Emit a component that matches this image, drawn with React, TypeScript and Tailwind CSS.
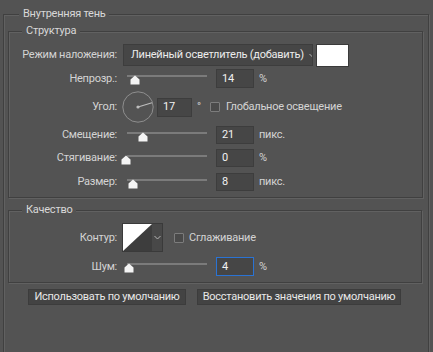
import React from 'react'

// thumb centre, counted from the left end of the track
interface SliderProps {
    pos: number
}

const Slider = ({ pos }: SliderProps) => (
    <div className="relative ml-[9px] h-full w-[80px] shrink-0">
        <div className="absolute left-0 right-0 top-[6px] h-[2px] bg-[#7b7b7b]" />
        <svg className="absolute top-[6px]" style={{ left: pos - 5 }} width="10" height="10" viewBox="0 0 10 10">
            <path d="M5 0.5 L9.5 4.5 V9.5 H0.5 V4.5 Z" fill="#f4f4f4" />
        </svg>
    </div>
)

const NumBox = ({ value, active }: { value: string; active?: boolean }) => (
    <div
        className={`ml-[9px] flex h-full w-[38px] shrink-0 items-center border pl-[5px] text-[#f2f2f2] ${
            active ? 'border-[#2a73d4] bg-[#464646]' : 'border-[#3d3d3d] bg-[#464646]'
        }`}
    >
        {value}
    </div>
)

const Label = ({ text }: { text: string }) => (
    <div className="w-[109px] shrink-0 whitespace-nowrap pr-[1px] text-right text-[#d3d3d3]">{text}</div>
)

const CheckBox = ({ className }: { className: string }) => (
    <div className={`h-[10px] w-[10px] shrink-0 rounded-[1px] border border-[#7c7c7c] bg-[#4a4a4a] ${className}`} />
)

const Chevron = () => (
    <svg width="7" height="5" viewBox="0 0 7 5">
        <path d="M0.5 1 L3.5 4 L6.5 1" fill="none" stroke="#b4b4b4" strokeWidth="1" />
    </svg>
)

const SliderRow = ({ label, pos, value, unit, active, className }: {
    label: string; pos: number; value: string; unit: string; active?: boolean; className: string
}) => (
    <div className={`flex items-center ${className}`}>
        <Label text={label} />
        <Slider pos={pos} />
        <NumBox value={value} active={active} />
        <div className="ml-[5px] text-[#d3d3d3]">{unit}</div>
    </div>
)

const boxCls = 'border border-[#404040] shadow-[inset_1px_1px_0_#616161,1px_1px_0_#616161]'
const legendCls = 'bg-[#535353] px-[4px] leading-[16px] text-[#d8d8d8]'

// COMPONENT: INNER SHADOW PANEL
export default function App() {
    return (
        <div className="h-[352px] w-[433px] overflow-hidden bg-[#535353] font-['Roboto',sans-serif] text-[11px] leading-[16px] tracking-[-0.25px]">
            <fieldset className={`ml-[3px] mt-[6px] h-[420px] w-[426px] pl-[4px] pr-[5px] ${boxCls}`}>
                <legend className={`ml-[11px] ${legendCls}`}>Внутренняя тень</legend>

                {/* Structure */}
                <fieldset className={`mt-[1px] pb-[6px] ${boxCls}`}>
                    <legend className={`ml-[13px] ${legendCls}`}>Структура</legend>

                    <div className="mt-[5px] flex h-[22px] items-center">
                        <Label text="Режим наложения:" />
                        <div className="ml-[5px] flex h-full w-[190px] items-center overflow-hidden border border-[#3d3d3d] bg-[#464646] pl-[7px] pr-[4px] text-[#ececec]">
                            <span className="whitespace-nowrap">Линейный осветлитель (добавить)</span>
                            <span className="ml-[5px] flex">
                                <Chevron />
                            </span>
                        </div>
                        <div className="ml-[3px] h-[23px] w-[33px] border border-[#3a3a3a] bg-white" />
                    </div>

                    <SliderRow className="mt-[3px] h-[19px]" label="Непрозр.:" pos={8} value="14" unit="%" />

                    <div className="mt-[3px] flex h-[32px] items-center">
                        <Label text="Угол:" />
                        <svg className="ml-[4px] shrink-0" width="32" height="32" viewBox="0 0 32 32">
                            <circle cx="16" cy="16" r="15.2" fill="none" stroke="#8e8e8e" strokeWidth="1" />
                            <line x1="16" y1="16" x2="30" y2="11.7" stroke="#bdbdbd" strokeWidth="1.2" />
                            <circle cx="16" cy="16" r="1.6" fill="#bdbdbd" />
                        </svg>
                        <div className="ml-[3px] flex h-[19px] w-[35px] items-center border border-[#3d3d3d] bg-[#464646] pl-[5px] text-[#f2f2f2]">
                            17
                        </div>
                        <div className="ml-[5px] w-[8px] text-[#d3d3d3]">°</div>
                        <CheckBox className="ml-[5px]" />
                        <div className="ml-[6px] whitespace-nowrap text-[#d3d3d3]">Глобальное освещение</div>
                    </div>

                    <SliderRow className="mt-[3px] h-[18px]" label="Смещение:" pos={16} value="21" unit="пикс." />
                    <SliderRow className="mt-[5px] h-[18px]" label="Стягивание:" pos={-1} value="0" unit="%" />
                    <SliderRow className="mt-[6px] h-[18px]" label="Размер:" pos={6} value="8" unit="пикс." />
                </fieldset>

                {/* Quality */}
                <fieldset className={`mt-[4px] w-[414px] pb-[6px] ${boxCls}`}>
                    <legend className={`ml-[13px] ${legendCls}`}>Качество</legend>

                    <div className="mt-[5px] flex h-[29px] items-center">
                        <Label text="Контур:" />
                        <div className="ml-[4px] flex h-full border border-[#3a3a3a]">
                            <svg width="29" height="27" viewBox="0 0 29 27" className="block">
                                <rect width="29" height="27" fill="#3d3d3d" />
                                <path d="M0 0 H29 L0 27 Z" fill="#ffffff" />
                            </svg>
                            <div className="flex w-[10px] items-center justify-center bg-[#484848]">
                                <Chevron />
                            </div>
                        </div>
                        <CheckBox className="ml-[11px]" />
                        <div className="ml-[5px] text-[#d3d3d3]">Сглаживание</div>
                    </div>

                    <SliderRow className="mt-[5px] h-[19px]" label="Шум:" pos={2} value="4" unit="%" active />
                </fieldset>

                <div className="ml-[20px] mt-[6px] flex gap-[11px]">
                    <button type="button" className="h-[16px] w-[158px] whitespace-nowrap border border-[#3c3c3c] bg-[#434343] leading-[14px] text-[#e8e8e8]">
                        Использовать по умолчанию
                    </button>
                    <button type="button" className="h-[16px] w-[204px] whitespace-nowrap border border-[#3c3c3c] bg-[#434343] leading-[14px] text-[#e8e8e8]">
                        Восстановить значения по умолчанию
                    </button>
                </div>
            </fieldset>
        </div>
    )
}
